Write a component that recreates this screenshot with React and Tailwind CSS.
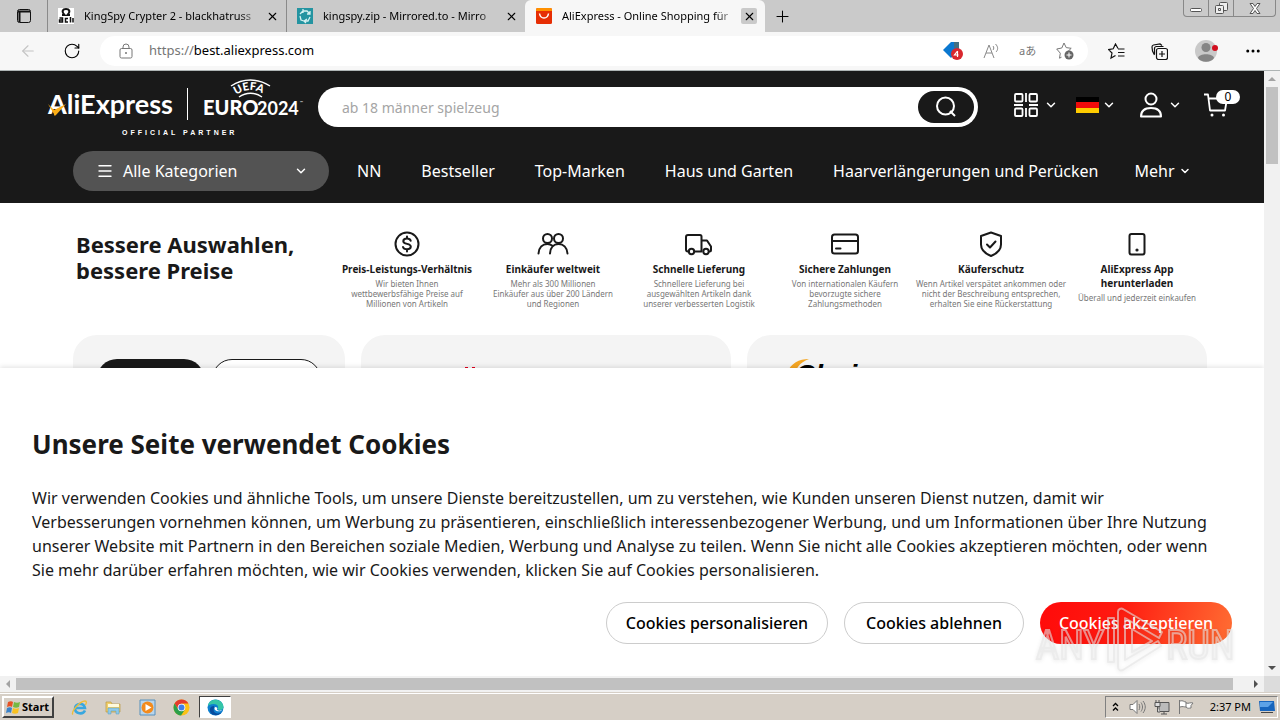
import { ChevronDown, Menu, X, Plus, RotateCw, ArrowLeft, Ellipsis } from 'lucide-react';

const features = [
  { title: ['Preis-Leistungs-Verhältnis'], text: ['Wir bieten Ihnen', 'wettbewerbsfähige Preise auf', 'Millionen von Artikeln'], icon: <DollarIcon /> },
  { title: ['Einkäufer weltweit'], text: ['Mehr als 300 Millionen', 'Einkäufer aus über 200 Ländern', 'und Regionen'], icon: <PeopleIcon /> },
  { title: ['Schnelle Lieferung'], text: ['Schnellere Lieferung bei', 'ausgewählten Artikeln dank', 'unserer verbesserten Logistik'], icon: <TruckIcon /> },
  { title: ['Sichere Zahlungen'], text: ['Von internationalen Käufern', 'bevorzugte sichere', 'Zahlungsmethoden'], icon: <CardIcon /> },
  { title: ['Käuferschutz'], text: ['Wenn Artikel verspätet ankommen oder', 'nicht der Beschreibung entsprechen,', 'erhalten Sie eine Rückerstattung'], icon: <ShieldIcon /> },
  { title: ['AliExpress App', 'herunterladen'], text: ['Überall und jederzeit einkaufen'], icon: <PhoneIcon /> },
];

function FeatureSvg({ children }) {
  return (
    <svg width="34" height="28" viewBox="0 0 34 28" fill="none" stroke="#191919" strokeWidth="2" strokeLinecap="round" strokeLinejoin="round">
      {children}
    </svg>
  );
}

function DollarIcon() {
  return (
    <FeatureSvg>
      <circle cx="17" cy="14" r="11.5" />
      <path d="M17 6.500v2M17 19.500v2M20.700 10.800c-.5-1.500-1.900-2.200-3.700-2.200-2 0-3.700.9-3.700 2.600 0 3.600 7.500 1.800 7.500 5.300 0 1.900-1.700 2.800-3.800 2.800s-3.600-.8-4-2.300" />
    </FeatureSvg>
  );
}

function PeopleIcon() {
  return (
    <FeatureSvg>
      <circle cx="11.500" cy="8.500" r="4.500" />
      <circle cx="22.500" cy="8.500" r="4.500" />
      <path d="M2.500 23.500c.4-6 4-9.500 9-9.500 2 0 3.500.6 5 1.700M14 23.500c.3-6 3.700-9.500 8.500-9.500s8.500 3.500 9 9.500" />
    </FeatureSvg>
  );
}

function TruckIcon() {
  return (
    <FeatureSvg>
      <path d="M7 21.500H6a2 2 0 0 1-2-2V7a2 2 0 0 1 2-2h12a1.500 1.500 0 0 1 1.500 1.500V21.500H12.500M19.500 10.500h5.500l4 6v3.500a1.500 1.500 0 0 1-1.500 1.500" />
      <circle cx="9.500" cy="21.500" r="2.700" />
      <circle cx="24" cy="21.500" r="2.700" />
    </FeatureSvg>
  );
}

function CardIcon() {
  return (
    <FeatureSvg>
      <rect x="4" y="4.500" width="26" height="19" rx="2.500" />
      <path d="M4 11h26M8 18.500h4.500" />
    </FeatureSvg>
  );
}

function ShieldIcon() {
  return (
    <FeatureSvg>
      <path d="M17 2.500 27 6v8.500c0 5-4 9-10 11.500-6-2.500-10-6.500-10-11.500V6z" />
      <path d="m13 14.500 3 3 5.500-6" />
    </FeatureSvg>
  );
}

function PhoneIcon() {
  return (
    <FeatureSvg>
      <rect x="9.500" y="4" width="15" height="20.500" rx="2" />
      <circle cx="17" cy="20" r="1" fill="#191919" strokeWidth="1.200" />
    </FeatureSvg>
  );
}

function AliLogo() {
  return (
    <svg width="264" height="64" viewBox="0 0 264 64" className="shrink-0" role="img" aria-label="AliExpress UEFA EURO2024 Official Partner">
      <text x="8" y="39" fill="#fff" fontFamily="Lato, sans-serif" fontWeight="700" fontSize="27">AliExpress</text>
      <path d="m8 29 6 6 12-6-10 11c-1 1-2 1-2-1z" fill="#fbae17" />
      <path d="M147.500 13v32" stroke="#fff" />
      <text x="163" y="40" fill="#fff" fontFamily="Lato, sans-serif" fontWeight="900" fontSize="20">EURO</text>
      <text x="217" y="40" fill="#fff" fontFamily="Lato, sans-serif" fontWeight="700" fontSize="18">2024</text>
      <path d="M191 11c12-8 27-8 39 0M199 22c7-5 16-5 23 0" fill="none" stroke="#fff" strokeWidth="1.500" />
      <path id="uefa" d="M196 20c10-7 20-7 31 2" fill="none" />
      <text fill="#fff" fontFamily="Lato, sans-serif" fontWeight="900" fontSize="11"><textPath href="#uefa">UEFA</textPath></text>
      <text x="82" y="60" fill="#fff" fontFamily='"Liberation Sans", sans-serif' fontWeight="700" fontSize="7" letterSpacing="3">OFFICIAL PARTNER</text>
      <text x="260" y="29" fill="#fff" fontFamily="Lato, sans-serif" fontSize="4">™</text>
    </svg>
  );
}

function Tab({ icon, title, active }) {
  return (
    <div className={active ? 'flex w-60 items-center rounded-t-md bg-[#f7f7f7] pl-[11px] pr-2' : 'flex w-[239px] items-center border-l border-[#8a8a8a] pl-2.5 pr-1.5'}>
      {icon}
      <span className="ml-2.5 flex-1 whitespace-nowrap text-[11px] [mask-image:linear-gradient(to_right,black_88%,transparent)]">{title}</span>
      <button aria-label="Tab schließen" className={active ? 'ml-1 flex size-4 items-center justify-center rounded-xs bg-[#cacaca]' : 'ml-1 flex size-4 items-center justify-center'}>
        <X size={13} strokeWidth={2} />
      </button>
    </div>
  );
}

function TabBar() {
  return (
    <div className="flex h-8 shrink-0 bg-[#cacaca]">
      <button aria-label="Tabmenü" className="flex w-[47px] items-center justify-center">
        <svg width="14" height="14" viewBox="0 0 14 14" fill="none" stroke="#111"><rect x=".5" y=".5" width="13" height="13" rx="2" /><path d="M1 2.500h12M2.500 3v10" strokeWidth="2" /></svg>
      </button>
      <Tab title="KingSpy Crypter 2 - blackhatruss" icon={
        <svg width="16" height="16" viewBox="0 0 16 16" className="shrink-0"><path d="M0 0h16v16H0z" fill="#fff" /><path d="M4 7h2.500C3 3 5 1 8 1s5 2 1.500 6H12" fill="none" stroke="#111" strokeWidth="2" /><path d="M1.500 10h3v4h-3v-2h3M10 10.500H7.500V14H10M12.500 9v5.500M15 10v4.500" fill="none" stroke="#111" strokeWidth="1.500" /></svg>
      } />
      <Tab title="kingspy.zip - Mirrored.to - Mirro" icon={
        <svg width="16" height="16" viewBox="0 0 16 16" className="shrink-0"><path d="M0 0h16v16H0z" fill="#2494a1" /><path d="m3 6 3-3h4l3 3M13 9l-2 4H7M3 8l1 4 3 1M6 1v4M13 3v3h-3M10 11l-3 2 2 2" fill="none" stroke="#d5f1f1" strokeWidth="1.300" /></svg>
      } />
      <Tab active title="AliExpress - Online Shopping für" icon={
        <svg width="16" height="16" viewBox="0 0 16 16" className="shrink-0"><rect width="16" height="16" rx="1.500" fill="#e62e04" /><path d="M0 1.500A1.500 1.500 0 0 1 1.500 0h13A1.500 1.500 0 0 1 16 1.500V3H0z" fill="#ff9000" /><path d="M3.500 5.500c1 6 8 6 9 0" fill="none" stroke="#fff" strokeWidth="1.500" /></svg>
      } />
      <button aria-label="Neuer Tab" className="ml-2 flex items-center"><Plus size={19} strokeWidth={1.300} /></button>
      <div className="ml-auto mr-1 flex h-[17px] overflow-hidden rounded-b-sm border border-t-0 border-[#888] text-[#555]">
        <button aria-label="Minimieren" className="flex w-[25px] items-center justify-center border-r border-[#888] pt-1">
          <svg width="12" height="4" viewBox="0 0 12 4"><rect x=".5" y=".5" width="11" height="3" rx="1" fill="#fff" stroke="#555" /></svg>
        </button>
        <button aria-label="Wiederherstellen" className="flex w-[25px] items-center justify-center border-r border-[#888]">
          <svg width="13" height="13" viewBox="0 0 13 13" fill="#eee" stroke="#555"><rect x="4.500" y=".5" width="8" height="8" rx="1" /><rect x=".5" y="3.500" width="8" height="8" rx="1" /><path d="M3.500 6.500h2v2h-2z" /></svg>
        </button>
        <button aria-label="Schließen" className="flex w-[41px] items-center justify-center">
          <svg width="12" height="11" viewBox="0 0 12 11"><path d="M1 .5h3l2 3 2-3h3L7.500 5.500l3.500 5H8l-2-3-2 3H1l3.500-5z" fill="#fff" stroke="#555" /></svg>
        </button>
      </div>
    </div>
  );
}

function Toolbar() {
  return (
    <div className="flex h-[39px] shrink-0 items-center border-b border-[#aeb4b4] bg-[#f7f7f7]">
      <button aria-label="Zurück" className="ml-[19px] text-[#c4c4c4]"><ArrowLeft size={18} strokeWidth={1.500} /></button>
      <button aria-label="Neu laden" className="ml-[26px]"><RotateCw size={18} strokeWidth={1.500} /></button>
      <div className="ml-[19px] flex h-[30px] flex-1 items-center rounded-full bg-white pl-[19px] pr-3.5 text-[#757575]">
        <svg width="14" height="16" viewBox="0 0 14 16" fill="none" stroke="#777"><rect x="1" y="5.500" width="12" height="9.500" rx="1.500" /><path d="M4 5.500V4a3 3 0 0 1 6 0v1.500" /><circle cx="7" cy="10" r=".6" fill="#777" /></svg>
        <label htmlFor="address" className="ml-4 text-[13px]">https://</label>
        <input id="address" className="w-10 flex-1 text-[13px] text-black outline-none" defaultValue="best.aliexpress.com" />
        <div className="flex items-center gap-[19px]">
          <svg width="22" height="20" viewBox="0 0 22 20"><path d="m1 9 8-8h8v8l-8 8z" fill="#0b78d0" /><path d="M12 1h5v6h-5z" fill="#426f83" /><circle cx="15" cy="13" r="6" fill="#d9272e" /><path d="m15.500 10-3 4h4M15.500 10v6" stroke="#fff" strokeWidth="1.200" fill="none" /></svg>
          <svg width="17" height="16" viewBox="0 0 17 16" fill="none" stroke="#888"><path d="m1 15 5-13 5 13M3 10h6M10 3c1 1 1 3 0 4M12.500 1c3 3 2.500 6 .5 8" /></svg>
          <span className="w-[18px] whitespace-nowrap text-[11px] leading-4">aあ</span>
          <svg width="18" height="18" viewBox="0 0 18 18" fill="none" stroke="#777"><path d="m8 1 2.200 4.600 5 .7-3.600 3.500M5.500 15.200l-2 1 .8-5L.7 7 5.800 6 8 1" /><circle cx="13" cy="13" r="4.500" fill="#666" stroke="none" /><path d="M13 10.500v5M10.500 13h5" stroke="#fff" /></svg>
        </div>
      </div>
      <div className="ml-5 mr-[18px] flex items-center gap-[26px]">
        <svg width="17" height="17" viewBox="0 0 17 17" fill="none" stroke="#111" strokeWidth="1.200"><path d="M10 5.500 7.500 1 5.200 5.800l-4.600.8L4 10l-1 5 4.500-2.500M10 6h6.500M10 9.500h6.500M10 13h6.500" /></svg>
        <svg width="17" height="17" viewBox="0 0 17 17" fill="none" stroke="#111" strokeWidth="1.200"><path d="M3.500 12 1.500 8 1 4a2 2 0 0 1 1.500-2L9 1l2 1.500" /><path d="M3.500 11V5.500a2 2 0 0 1 2-2h7" /><rect x="5.500" y="5.500" width="11" height="11" rx="2" fill="#f7f7f7" /><path d="M11 8v6M8 11h6" /></svg>
        <svg width="24" height="24" viewBox="0 0 24 24"><circle cx="12" cy="12" r="11" fill="#c9c9c9" /><circle cx="12" cy="8.500" r="4.500" fill="#858585" /><path d="M4 19c1-5 15-5 16 0-3 5-13 5-16 0" fill="#858585" /><circle cx="21" cy="9" r="3" fill="#d20f1f" /></svg>
        <Ellipsis size={18} />
      </div>
    </div>
  );
}

function ShopHeader() {
  return (
    <header className="bg-[#191919] pb-3 text-white">
      <div className="flex h-20 items-start pl-10 pr-6">
        <div className="-mr-px pt-1"><AliLogo /></div>
        <div className="ml-[15px] mt-4 flex h-10 flex-1 items-center rounded-full bg-white p-1">
          <input aria-label="Suche" placeholder="ab 18 männer spielzeug" className="w-10 flex-1 pl-5 text-[14px] text-black outline-none placeholder:text-[#a5a5a5]" />
          <button aria-label="Suchen" className="flex h-8 w-14 items-center justify-center rounded-full bg-[#191919]">
            <svg width="22" height="22" viewBox="0 0 22 22" fill="none" stroke="#fff" strokeWidth="2"><circle cx="10.500" cy="10" r="8.500" /><path d="m15 15 5 5" /></svg>
          </button>
        </div>
        <div className="ml-9 mt-5 flex h-7 items-center">
          <svg width="24" height="24" viewBox="0 0 24 24" fill="none" stroke="#fff" strokeWidth="1.800"><rect x="1" y="1" width="7.500" height="7.500" rx="1" /><rect x="15.500" y="1" width="7.500" height="7.500" rx="1" /><rect x="1" y="15.500" width="7.500" height="7.500" rx="1" /><rect x="15.500" y="15.500" width="7.500" height="7.500" rx="1" /><path d="M12 0v9M0 12h9M15 12h9M12 15v9" /></svg>
          <ChevronDown size={14} strokeWidth={2.500} className="ml-1.5" />
          <svg width="23" height="16" viewBox="0 0 23 16" className="ml-[18px]"><path d="M0 0h23v5H0z" fill="#000" /><path d="M0 5h23v6H0z" fill="#f00b0b" /><path d="M0 11h23v5H0z" fill="#fc0" /></svg>
          <ChevronDown size={14} strokeWidth={2.500} className="ml-[3px]" />
          <svg width="22" height="26" viewBox="0 0 22 26" fill="none" stroke="#fff" strokeWidth="2" className="ml-6"><circle cx="11" cy="7" r="5.500" /><path d="M1 24.500c0-6 4-8.500 10-8.500s10 2.500 10 8.500z" strokeLinejoin="round" /></svg>
          <ChevronDown size={14} strokeWidth={2.500} className="ml-1.5" />
          <div className="relative ml-[22px] mr-3">
            <svg width="24" height="24" viewBox="0 0 24 24" fill="none" stroke="#fff" strokeWidth="1.800"><path d="M0 1.500h4l2 16h15l2-12H5" strokeLinejoin="round" /><circle cx="8" cy="22" r="1.500" fill="#fff" stroke="none" /><circle cx="19.500" cy="22" r="1.500" fill="#fff" stroke="none" /></svg>
            <span className="absolute -top-[3px] left-3 w-6 rounded-full bg-white text-center text-[12px] leading-[14px] text-black">0</span>
          </div>
        </div>
      </div>
      <nav className="flex h-10 items-center whitespace-nowrap pl-[73px] text-[16px]">
        <button className="mr-7 flex h-10 w-64 items-center rounded-full bg-[#535353] px-[23px]">
          <Menu size={18} strokeWidth={1.800} />
          <span className="ml-[9px] flex-1 text-left">Alle Kategorien</span>
          <ChevronDown size={14} strokeWidth={2.500} className="-mr-0.5" />
        </button>
        <a href="#nn" className="mr-10">NN</a>
        <a href="#bestseller" className="mr-10">Bestseller</a>
        <a href="#top-marken" className="mr-10">Top-Marken</a>
        <a href="#haus" className="mr-10">Haus und Garten</a>
        <a href="#haar" className="mr-9">Haarverlängerungen und Perücken</a>
        <button className="flex items-center gap-1">Mehr <ChevronDown size={12} strokeWidth={3} /></button>
      </nav>
    </header>
  );
}

function Benefits() {
  return (
    <section className="flex h-[132px] pl-[76px] pr-[54px] text-[#191919]">
      <h2 className="w-[258px] shrink-0 pt-7 text-[22px] font-bold leading-[26px]">Bessere Auswahlen,<br />bessere Preise</h2>
      <div className="grid flex-1 grid-cols-6 pt-[27px]">
        {features.map((f) => (
          <div key={f.title[0]} className="flex flex-col items-center whitespace-nowrap text-center">
            {f.icon}
            <h3 className="mt-1 text-[10px] font-bold leading-[14px]">
              {f.title.map((line) => <span key={line} className="block">{line}</span>)}
            </h3>
            <p className="mt-[3px] text-[8px] leading-[10px] text-[#777]">
              {f.text.map((line) => <span key={line} className="block">{line}</span>)}
            </p>
          </div>
        ))}
      </div>
    </section>
  );
}

function Cards() {
  return (
    <div className="grid h-60 grid-cols-[272fr_370fr_460fr] gap-4 pl-[73px] pr-[57px] [&>div]:rounded-3xl [&>div]:bg-[#f4f4f4]">
      <div className="flex items-start gap-2 px-6 pt-6">
        <div className="h-10 flex-1 rounded-full bg-[#191919]" />
        <div className="h-10 flex-1 rounded-full border border-[#191919] bg-white" />
      </div>
      <div className="pl-[104px] pt-8">
        <svg width="11" height="6" viewBox="0 0 11 6"><path d="M0 0h3v3H0zM7 0h3v3H7z" fill="#e0001f" /></svg>
      </div>
      <div className="pl-10 pt-6">
        <svg width="80" height="30" viewBox="0 0 80 30"><path d="M0 14C4 4 12 0 22 0 12 4 9 9 7 18z" fill="#f5a623" /><text x="8" y="25" fontFamily='"Liberation Sans", sans-serif' fontSize="28" fontWeight="700" fontStyle="italic">Choice</text></svg>
      </div>
    </div>
  );
}

function CookieBanner() {
  return (
    <div role="dialog" aria-label="Cookies" className="absolute inset-x-0 bottom-0 bg-white px-8 pb-8 text-[#191919] shadow-[0_-1px_5px_rgba(0,0,0,0.12)]">
      <h1 className="pt-[58px] text-[26px] font-bold leading-9">Unsere Seite verwendet Cookies</h1>
      <p className="mt-6 pr-2 text-[16px] leading-6">
        Wir verwenden Cookies und ähnliche Tools, um unsere Dienste bereitzustellen, um zu verstehen, wie Kunden unseren Dienst nutzen, damit wir Verbesserungen vornehmen können, um Werbung zu präsentieren, einschließlich interessenbezogener Werbung, und um Informationen über Ihre Nutzung unserer Website mit Partnern in den Bereichen soziale Medien, Werbung und Analyse zu teilen. Wenn Sie nicht alle Cookies akzeptieren möchten, oder wenn Sie mehr darüber erfahren möchten, wie wir Cookies verwenden, klicken Sie auf Cookies personalisieren.
      </p>
      <div className="mt-5 flex justify-end gap-4 whitespace-nowrap text-[16px] font-medium text-black">
        <button className="h-[42px] w-[222px] rounded-full border border-[#ccc]">Cookies personalisieren</button>
        <button className="h-[42px] w-[180px] rounded-full border border-[#ccc]">Cookies ablehnen</button>
        <button className="h-[42px] w-48 rounded-full bg-[linear-gradient(105deg,#ff0a0a_0%,#ff1a10_40%,#ff6e33_100%)] text-white">Cookies akzeptieren</button>
      </div>
      <Watermark />
    </div>
  );
}

function Watermark() {
  return (
    <svg className="pointer-events-none absolute bottom-0.5 right-7 opacity-60 drop-shadow-sm" width="202" height="68" viewBox="0 0 202 68" fill="none" stroke="#e0e0e0" strokeWidth="2" aria-hidden="true">
      <text x="2" y="53" fontFamily='"Liberation Sans Narrow", "Roboto Condensed", sans-serif' fontSize="40">ANY</text>
      <text x="132" y="53" fontFamily='"Liberation Sans Narrow", "Roboto Condensed", sans-serif' fontSize="40">RUN</text>
      <path d="M74 12h6v44h-6zM84 56V6c0-3 3-4 5-3l39 23-3 6-34-20v42l33-19 3 5-38 24c-3 1-5 0-5-3zM98 23l20 12-20 11z" strokeLinejoin="round" />
    </svg>
  );
}

function Page() {
  return (
    <main className="relative min-w-0 flex-1 overflow-hidden bg-white">
      <ShopHeader />
      <Benefits />
      <Cards />
      <CookieBanner />
    </main>
  );
}

function Taskbar() {
  return (
    <footer className="flex h-[27px] shrink-0 items-center border-t border-white bg-[#d6cfc6] pl-0.5 text-[11px] text-black">
      <button className="flex h-[22px] w-[52px] items-center gap-px border-2 border-b-[#404040] border-l-white border-r-[#404040] border-t-white pl-0.5 font-bold">
        <svg width="15" height="15" viewBox="0 0 15 15"><path d="M2 2c2-1 4-1 5 0L6 7C5 6 3 6 1 7z" fill="#e75124" /><path d="M8 2c2 1 4 1 6 0l-1 5c-2 1-4 1-6 0z" fill="#75b843" /><path d="M1 8c2-1 4-1 5 0l-1 5c-1-1-3-1-5 0z" fill="#3a82c9" /><path d="M7 8c2 1 4 1 6 0l-1 5c-2 1-4 1-6 0z" fill="#f8c121" /></svg>
        Start
      </button>
      <div className="ml-[17px] flex items-center gap-[17px]">
        <svg width="17" height="17" viewBox="0 0 17 17" fill="none"><path d="M14 11.500C12 16 4 15 4 9.500S13 3 14 9H5" stroke="#38a7df" strokeWidth="2.500" /><path d="M2 15.500c-3-2 7-13.500 12-13.500 2 0 1.500 2 .5 4" stroke="#eebd38" strokeWidth="1.300" /></svg>
        <svg width="17" height="17" viewBox="0 0 17 17"><path d="M1 3h5l1 2h8v8H1z" fill="#f0ce6a" stroke="#b99a43" strokeWidth=".7" /><path d="M3 5h11v3H3z" fill="#fffadc" /><path d="M3 9h11v6h-3v-3H6v3H3z" fill="#8fc9e9" stroke="#579dbf" strokeWidth=".5" /></svg>
        <svg width="17" height="17" viewBox="0 0 17 17"><path d="M1 1h15v15H1z" fill="#b9d5eb" stroke="#5690bd" /><circle cx="8.500" cy="8.500" r="6" fill="#f38b1d" /><path d="m6.500 5 6 3.500-6 3.500z" fill="#fff" /></svg>
        <svg width="17" height="17" viewBox="0 0 17 17"><circle cx="8.500" cy="8.500" r="8" fill="#fbc116" /><path d="M1.600 4.500a8 8 0 0 1 13.800 0H8.500l-3.300 6z" fill="#e33b2e" /><path d="M1.600 4.500A8 8 0 0 0 8 16.500l4-6-7-.5z" fill="#2b9f4b" /><circle cx="8.500" cy="8.500" r="3.800" fill="#fff" /><circle cx="8.500" cy="8.500" r="3" fill="#3f7fe8" /></svg>
      </div>
      <button aria-label="Edge" className="ml-[9px] flex h-[22px] w-8 items-center justify-center border border-b-white border-l-[#404040] border-r-white border-t-[#404040] bg-white">
        <svg width="17" height="17" viewBox="0 0 17 17"><circle cx="8.500" cy="8.500" r="8" fill="#0d7fcf" /><path d="M1 7C2-2 16-1 16.500 8c0 3-4 4-6 2 2-3-1-5-4-5S2 6 1 7" fill="#35c6a7" /><path d="M7 9c-2 5 4 7 8 4-3 5-13 4-12-3 0-2 2-3 4-3z" fill="#084c9e" /><path d="M8 8c-2 3 2 5 6 4l1-1c-2 1-5 1-5-1 1-1 0-2-2-2" fill="#fff" /></svg>
      </button>
      <div className="ml-auto mr-0.5 flex h-[22px] items-center border border-b-white border-l-[#808080] border-r-white border-t-[#808080] pl-1.5 pr-0.5">
        <svg width="7" height="10" viewBox="0 0 7 10" fill="none" stroke="#000" strokeWidth="1.300"><path d="m1 4 2.500-2.500L6 4M1 8.500 3.500 6 6 8.500" /></svg>
        <svg width="17" height="16" viewBox="0 0 17 16" fill="#fff" stroke="#777" className="ml-2.5"><path d="M1 5.500h3l4-4v13l-4-4H1z" /><path d="M10 5c1 2 1 4 0 6M12 3.500c2 3 2 6 0 9M14 2c3 4 3 8 0 12" fill="none" /></svg>
        <svg width="16" height="16" viewBox="0 0 16 16" fill="#ddd" stroke="#555" className="ml-2"><path d="M5 3.500h10v9H5z" fill="#bbb" /><path d="M7 15h6M10 12.500V15M1 3.500h5v4H1zM2 1v2M5 1v2M3.500 8v5H6" /></svg>
        <svg width="16" height="16" viewBox="0 0 16 16" fill="#fff" stroke="#777" className="ml-2"><path d="M1.500 1v14M2 2c3-1 4 1 6 1v5C6 8 5 7 2 8M8 4c3 1 4-1 7 0l-2 2.500 0 2.500C11 9 10 10 8 8" /></svg>
        <time className="ml-4 mr-2 whitespace-nowrap">2:37 PM</time>
        <svg width="16" height="14" viewBox="0 0 16 14"><path d="M0 1h15l1 10H1z" fill="#1765bd" /><path d="M1 2h13l-5 5H1z" fill="#5ca2e7" /><path d="M2 12h12v1H2z" fill="#444" /></svg>
      </div>
    </footer>
  );
}

export default function App() {
  return (
    <div className="flex h-screen min-h-[600px] flex-col overflow-hidden bg-[#f7f7f7] font-['Noto_Sans','Noto_Sans_CJK_JP',sans-serif] text-[12px]">
      <TabBar />
      <Toolbar />
      <div className="flex min-h-0 flex-1">
        <Page />
        <div className="flex w-4 flex-col items-center justify-between bg-[#f1f1f1] pb-1.5 pt-1.5">
          <div className="flex w-full flex-col items-center">
            <svg width="8" height="4" viewBox="0 0 8 4" fill="#a3a3a3"><path d="m0 4 4-4 4 4z" /></svg>
            <div className="mt-1.5 h-[77px] w-3 bg-[#c1c1c1]" />
          </div>
          <svg width="8" height="4" viewBox="0 0 8 4" fill="#505050"><path d="m0 0 4 4 4-4z" /></svg>
        </div>
      </div>
      <div className="flex h-4 shrink-0 items-center bg-[#f1f1f1]">
        <svg width="16" height="8" viewBox="0 0 16 8" fill="#a3a3a3"><path d="m10 0-4 4 4 4z" /></svg>
        <div className="h-3 flex-1 bg-[#c1c1c1]" />
        <svg width="31" height="8" viewBox="0 0 31 8" fill="#505050"><path d="m21 0 4 4-4 4z" /></svg>
        <div className="h-4 w-4 bg-[#dcdcdc]" />
      </div>
      <div className="h-px shrink-0 bg-[#d6cfc6]" />
      <Taskbar />
    </div>
  );
}
